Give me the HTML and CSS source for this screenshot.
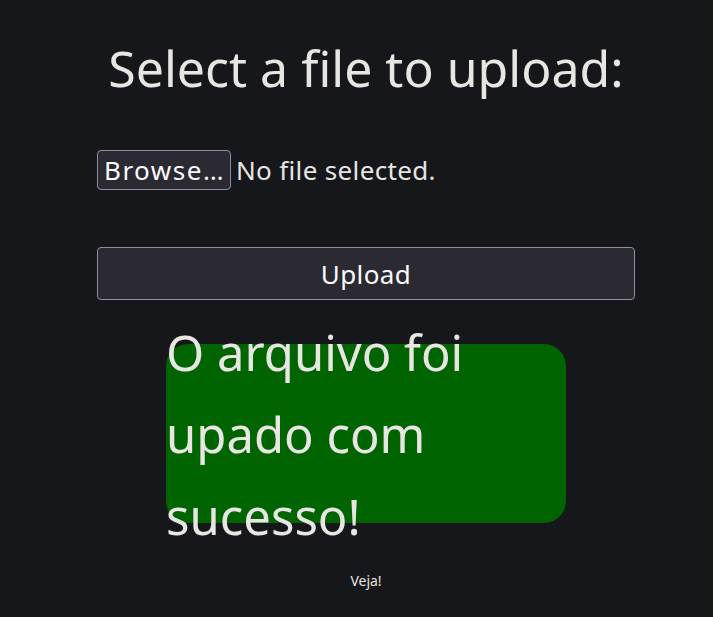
FILE: index.html
```html
<!DOCTYPE html>
<html lang="pt">
<head>
<meta charset="utf-8">
<title>Upload</title>
<link rel="stylesheet" href="styles.css">
</head>
<body>
<main class="page">
  <h1 class="title">Select a file to upload:</h1>
  <form class="form">
    <div class="file-row">
      <span class="browse">Browse…</span>
      <span class="file-status">No file selected.</span>
    </div>
    <button type="button" class="upload">Upload</button>
  </form>
  <div class="success">
    <p class="success-text">O arquivo foi upado com sucesso!</p>
  </div>
  <p class="note">Veja!</p>
</main>
</body>
</html>
```
FILE: styles.css
```css
html, body {
  margin: 0;
  background: #16171a;
}
body {
  padding: 0 0 0 19px;
  color: #e8e6e3;
  font-family: "Noto Sans", sans-serif;
}
.page {
  width: 538px;
  margin: 0 auto;
  display: flex;
  flex-direction: column;
  align-items: center;
}
.title {
  margin: 31px 0 0;
  font-size: 50px;
  font-weight: 400;
  line-height: 74px;
  white-space: nowrap;
}
.form {
  align-self: stretch;
  display: flex;
  flex-direction: column;
  margin-top: 45px;
}
.file-row {
  display: flex;
  align-items: center;
  gap: 5px;
  font-size: 26px;
}
.browse {
  box-sizing: border-box;
  height: 40px;
  padding: 0 5px 0 6px;
  display: flex;
  align-items: center;
  background: #2b2a33;
  border: 1px solid #8f8f9d;
  border-radius: 4px;
  color: #fbfbfe;
  letter-spacing: 1.5px;
}
.file-status {
  color: #e8e6e3;
  letter-spacing: 0.35px;
}
.upload {
  box-sizing: border-box;
  margin-top: 57px;
  height: 53px;
  background: #2b2a33;
  border: 1px solid #8f8f9d;
  border-radius: 4px;
  color: #fbfbfe;
  font-family: inherit;
  font-size: 26px;
  letter-spacing: 0.4px;
}
.success {
  box-sizing: border-box;
  margin-top: 44px;
  width: 400px;
  height: 179px;
  background: #006400;
  border-radius: 22px;
  display: flex;
  align-items: center;
}
.success-text {
  margin: 0;
  font-size: 49px;
  line-height: 82px;
}
.note {
  margin: 48px 0 0;
  font-size: 14px;
}
```
